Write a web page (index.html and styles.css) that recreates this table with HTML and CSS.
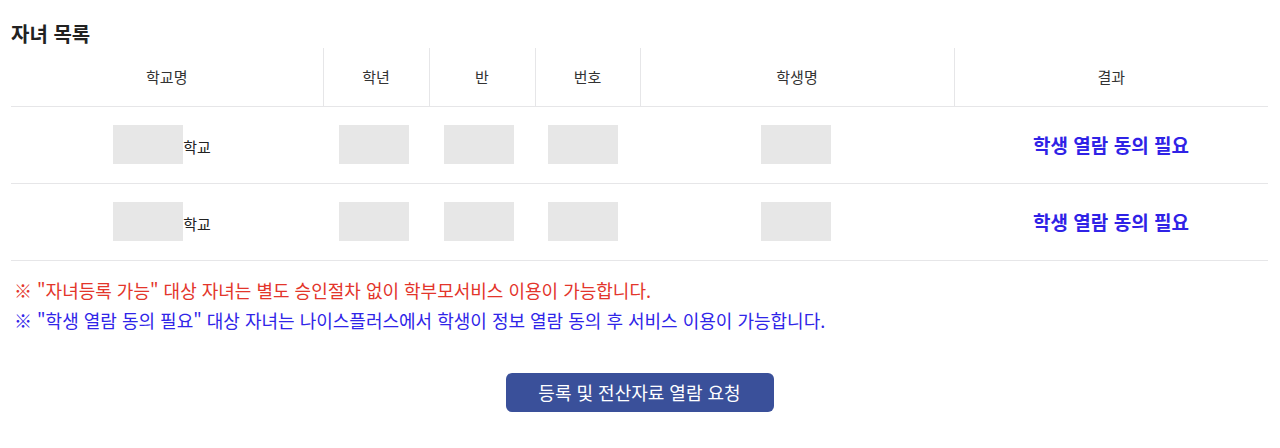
FILE: index.html
```html
<!DOCTYPE html>
<html lang="ko">
<head>
<meta charset="utf-8">
<link rel="stylesheet" href="styles.css">
</head>
<body>
<div class="page">
  <h2 class="title">자녀 목록</h2>
  <table class="list">
    <colgroup>
      <col style="width:312px"><col style="width:106px"><col style="width:106px"><col style="width:105px"><col style="width:314px"><col style="width:314px">
    </colgroup>
    <thead>
      <tr><th>학교명</th><th>학년</th><th>반</th><th>번호</th><th>학생명</th><th>결과</th></tr>
    </thead>
    <tbody>
      <tr>
        <td class="school"><span class="mask mask-school"></span>학교</td>
        <td class="c-grade"><span class="mask"></span></td>
        <td class="c-class"><span class="mask"></span></td>
        <td class="c-num"><span class="mask"></span></td>
        <td class="c-name"><span class="mask"></span></td>
        <td class="result">학생 열람 동의 필요</td>
      </tr>
      <tr>
        <td class="school"><span class="mask mask-school"></span>학교</td>
        <td class="c-grade"><span class="mask"></span></td>
        <td class="c-class"><span class="mask"></span></td>
        <td class="c-num"><span class="mask"></span></td>
        <td class="c-name"><span class="mask"></span></td>
        <td class="result">학생 열람 동의 필요</td>
      </tr>
    </tbody>
  </table>
  <div class="notes">
    <p class="note red">※ "자녀등록 가능" 대상 자녀는 별도 승인절차 없이 학부모서비스 이용이 가능합니다.</p>
    <p class="note blue">※ "학생 열람 동의 필요" 대상 자녀는 나이스플러스에서 학생이 정보 열람 동의 후 서비스 이용이 가능합니다.</p>
  </div>
  <div class="actions">
    <button class="btn">등록 및 전산자료 열람 요청</button>
  </div>
</div>
</body>
</html>
```
FILE: styles.css
```css
* { box-sizing: border-box; }
html, body { margin: 0; padding: 0; background: #fff; }
body {
  font-family: "Noto Sans CJK KR", "Noto Sans", sans-serif;
  color: #333;
}
.page { padding: 20px 12px 0 11px; }
.title {
  margin: 0;
  font-size: 20px;
  font-weight: 700;
  color: #222;
  line-height: 28px;
}
.list {
  width: 1257px;
  border-collapse: collapse;
  table-layout: fixed;
}
.list th {
  height: 58px;
  font-size: 15px;
  font-weight: 400;
  color: #333;
  border-bottom: 1px solid #e6e6e8;
  border-left: 1px solid #e6e6e8;
  padding: 0;
}
.list th:first-child { border-left: none; }
.list td {
  height: 77px;
  text-align: center;
  font-size: 15px;
  color: #222;
  border-bottom: 1px solid #e6e6e8;
  padding: 0;
}
.list td.school { padding-right: 10px; }
.list td.c-grade { padding-right: 4px; }
.list td.c-class { padding-right: 6px; }
.list td.c-num { padding-right: 9px; }
.list td.c-name { padding-right: 2px; }
.mask {
  display: inline-block;
  width: 70px;
  height: 39px;
  background: #e7e7e7;
  vertical-align: middle;
}
.mask-school { vertical-align: -11px; }
.list td.result {
  color: #2f22e6;
  font-weight: 700;
  font-size: 19px;
}
.notes { padding: 14px 0 0 3px; }
.note {
  margin: 0;
  font-size: 18px;
  line-height: 30px;
}
.red { color: #e3352b; }
.blue { color: #3025e8; }
.actions {
  display: flex;
  justify-content: center;
  padding-top: 38px;
}
.btn {
  width: 268px;
  height: 39px;
  border: none;
  border-radius: 6px;
  background: #3a509a;
  color: #fff;
  font-family: inherit;
  font-size: 18px;
  padding: 0;
}
```
